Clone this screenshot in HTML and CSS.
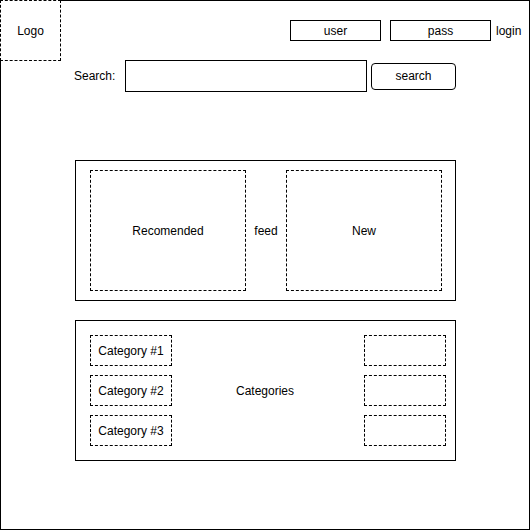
FILE: index.html
```html
<!DOCTYPE html>
<html>
<head>
<meta charset="utf-8">
<link rel="stylesheet" href="styles.css">
</head>
<body>
<div class="frame">
  <div class="top">
    <div class="logo">Logo</div>
    <div class="auth">
      <div class="field user">user</div>
      <div class="field pass">pass</div>
      <span class="login">login</span>
    </div>
  </div>
  <div class="search-row">
    <span class="search-label">Search:</span>
    <div class="search-input"></div>
    <div class="search-btn">search</div>
  </div>
  <div class="panel feed">
    <div class="dbox">Recomended</div>
    <div class="mid">feed</div>
    <div class="dbox">New</div>
  </div>
  <div class="panel cats">
    <div class="cat c1">Category #1</div>
    <div class="cat c2">Category #2</div>
    <div class="cat c3">Category #3</div>
    <div class="cat-label">Categories</div>
    <div class="cat r1"></div>
    <div class="cat r2"></div>
    <div class="cat r3"></div>
  </div>
</div>
</body>
</html>
```

FILE: styles.css
```css
* { box-sizing: border-box; }
html, body { margin: 0; padding: 0; background: #fff; }
body {
  font-family: "Liberation Sans", Arial, sans-serif;
  font-size: 12px;
  color: #000;
}
.frame {
  width: 530px;
  height: 530px;
  border: 1px solid #000;
}
.top {
  display: flex;
  align-items: flex-start;
}
.logo {
  width: 61px;
  height: 61px;
  margin: -1px 0 -1px -1px;
  border: 1px dashed #000;
  display: flex;
  align-items: center;
  justify-content: center;
  background: #fff;
}
.auth {
  display: flex;
  align-items: center;
  margin-top: 19px;
  margin-left: 229px;
}
.field {
  height: 21px;
  border: 1px solid #000;
  display: flex;
  align-items: center;
  justify-content: center;
}
.user { width: 91px; }
.pass { width: 101px; margin-left: 9px; }
.login { margin-left: 5px; }
.search-row {
  display: flex;
  align-items: center;
  margin-left: 73px;
}
.search-label { width: 51px; }
.search-input {
  width: 242px;
  height: 32px;
  border: 1px solid #000;
}
.search-btn {
  width: 85px;
  height: 27px;
  margin-left: 4px;
  border: 1px solid #000;
  border-radius: 4px;
  display: flex;
  align-items: center;
  justify-content: center;
}
.panel {
  width: 381px;
  height: 141px;
  margin-left: 74px;
  border: 1px solid #000;
}
.feed {
  margin-top: 68px;
  display: grid;
  grid-template-columns: 156px 1fr 156px;
  padding: 9px 13px 9px 14px;
}
.dbox {
  border: 1px dashed #000;
  display: flex;
  align-items: center;
  justify-content: center;
}
.mid {
  display: flex;
  align-items: center;
  justify-content: center;
}
.cats {
  margin-top: 19px;
  display: grid;
  grid-template-columns: 82px 1fr 82px;
  grid-template-rows: 31px 31px 31px;
  row-gap: 9px;
  padding: 14px 9px 14px 14px;
}
.cat {
  border: 1px dashed #000;
  display: flex;
  align-items: center;
  justify-content: center;
}
.c1 { grid-column: 1; grid-row: 1; }
.c2 { grid-column: 1; grid-row: 2; }
.c3 { grid-column: 1; grid-row: 3; }
.r1 { grid-column: 3; grid-row: 1; }
.r2 { grid-column: 3; grid-row: 2; }
.r3 { grid-column: 3; grid-row: 3; }
.cat-label {
  grid-column: 2;
  grid-row: 1 / 4;
  display: flex;
  align-items: center;
  justify-content: center;
  padding-right: 6px;
}
```
